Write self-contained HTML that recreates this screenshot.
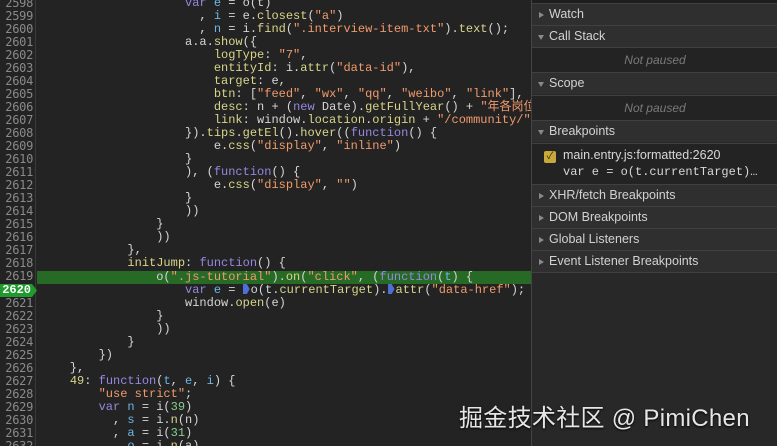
<!DOCTYPE html>
<html><head><meta charset="utf-8"><style>
*{margin:0;padding:0;box-sizing:border-box}
body{width:777px;height:446px;overflow:hidden;background:#232323;position:relative;font-family:"Liberation Sans","Noto Sans CJK SC",sans-serif}
#code{position:absolute;left:0;top:0;width:532px;height:446px;overflow:hidden;background:#232323}
#gut{position:absolute;left:0;top:0;width:36px;height:446px;background:#232323;border-right:1px solid #3a3a3a}
.ln{position:absolute;left:0;width:33px;text-align:right;font:12px/13px "DejaVu Sans Mono",monospace;color:#8a8a8a;letter-spacing:-0.3px}
.cl{position:absolute;left:41px;white-space:pre;font:12px/13px "Liberation Mono","Noto Sans CJK SC",monospace;color:#d6d6d6}
.k{color:#9488e0}.p{color:#d8d58a}.s{color:#f09a6c}.v{color:#6fb6e6}.n{color:#86d08e}
#hl{position:absolute;left:37px;top:271px;width:495px;height:13px;background:#266a26}
#bp{position:absolute;left:0;top:284px;width:37px;height:13px;background:#1f9a2d;clip-path:polygon(0 0,32px 0,37px 50%,32px 100%,0 100%)}
#bp span{position:absolute;right:6px;top:0;font:bold 12px/13px "Liberation Mono",monospace;color:#fff}
.mk{display:inline-block;width:7px;height:10px;background:#4f6fd8;vertical-align:-1px;clip-path:polygon(0 0,60% 0,100% 50%,60% 100%,0 100%);margin-right:1px}
#side{position:absolute;left:531px;top:0;width:246px;height:446px;background:#282828;border-left:1px solid #444}
.h{position:absolute;left:0;width:246px;height:22px;background:#2f2f2f;border-top:1px solid #404040;font-size:12.5px;line-height:21px;color:#d2d2d2;padding-left:17px}
.h:before{content:"";position:absolute;left:7px;top:8px;border-left:5px solid #8a8a8a;border-top:3.5px solid transparent;border-bottom:3.5px solid transparent}
.h.o:before{left:6px;top:9px;border-top:5px solid #8a8a8a;border-left:3.5px solid transparent;border-right:3.5px solid transparent;border-bottom:0}
.c{position:absolute;left:0;width:246px;background:#232323;border-top:1px solid #404040}
.np{text-align:center;font-style:italic;font-size:12px;color:#7a7a7a}
#wm{position:absolute;left:459px;top:398px;font-size:24px;color:#e6e6e6;text-shadow:0 1px 2px #000;letter-spacing:0.3px;font-family:"Liberation Sans","Noto Sans CJK SC",sans-serif}
</style></head><body>
<div id="code">
<div id="gut"></div>
<div id="hl"></div>
<div id="bp"><span>2620</span></div>
<div class="ln" style="top:-3px">2598</div><div class="cl" style="top:-3px">                    <span class="k">var</span> <span class="v">e</span> = o(t)</div>
<div class="ln" style="top:10px">2599</div><div class="cl" style="top:10px">                      , <span class="v">i</span> = e.<span class="p">closest</span>(<span class="s">"a"</span>)</div>
<div class="ln" style="top:23px">2600</div><div class="cl" style="top:23px">                      , <span class="v">n</span> = i.<span class="p">find</span>(<span class="s">".interview-item-txt"</span>).<span class="p">text</span>();</div>
<div class="ln" style="top:36px">2601</div><div class="cl" style="top:36px">                    a.a.<span class="p">show</span>({</div>
<div class="ln" style="top:49px">2602</div><div class="cl" style="top:49px">                        <span class="p">logType</span>: <span class="s">"7"</span>,</div>
<div class="ln" style="top:62px">2603</div><div class="cl" style="top:62px">                        <span class="p">entityId</span>: i.<span class="p">attr</span>(<span class="s">"data-id"</span>),</div>
<div class="ln" style="top:75px">2604</div><div class="cl" style="top:75px">                        <span class="p">target</span>: e,</div>
<div class="ln" style="top:88px">2605</div><div class="cl" style="top:88px">                        <span class="p">btn</span>: [<span class="s">"feed"</span>, <span class="s">"wx"</span>, <span class="s">"qq"</span>, <span class="s">"weibo"</span>, <span class="s">"link"</span>],</div>
<div class="ln" style="top:101px">2606</div><div class="cl" style="top:101px">                        <span class="p">desc</span>: n + (<span class="k">new</span> Date).<span class="p">getFullYear</span>() + <span class="s">"年各岗位面试题"</span></div>
<div class="ln" style="top:114px">2607</div><div class="cl" style="top:114px">                        <span class="p">link</span>: window.<span class="p">location</span>.<span class="p">origin</span> + <span class="s">"/community/"</span></div>
<div class="ln" style="top:127px">2608</div><div class="cl" style="top:127px">                    }).<span class="p">tips</span>.<span class="p">getEl</span>().<span class="p">hover</span>((<span class="k">function</span>() {</div>
<div class="ln" style="top:140px">2609</div><div class="cl" style="top:140px">                        e.<span class="p">css</span>(<span class="s">"display"</span>, <span class="s">"inline"</span>)</div>
<div class="ln" style="top:153px">2610</div><div class="cl" style="top:153px">                    }</div>
<div class="ln" style="top:166px">2611</div><div class="cl" style="top:166px">                    ), (<span class="k">function</span>() {</div>
<div class="ln" style="top:179px">2612</div><div class="cl" style="top:179px">                        e.<span class="p">css</span>(<span class="s">"display"</span>, <span class="s">""</span>)</div>
<div class="ln" style="top:192px">2613</div><div class="cl" style="top:192px">                    }</div>
<div class="ln" style="top:205px">2614</div><div class="cl" style="top:205px">                    ))</div>
<div class="ln" style="top:218px">2615</div><div class="cl" style="top:218px">                }</div>
<div class="ln" style="top:231px">2616</div><div class="cl" style="top:231px">                ))</div>
<div class="ln" style="top:244px">2617</div><div class="cl" style="top:244px">            },</div>
<div class="ln" style="top:257px">2618</div><div class="cl" style="top:257px">            <span class="p">initJump</span>: <span class="k">function</span>() {</div>
<div class="ln" style="top:270px">2619</div><div class="cl" style="top:271px">                o(<span class="s">".js-tutorial"</span>).<span class="p">on</span>(<span class="s">"click"</span>, (<span class="k">function</span>(<span class="v">t</span>) {</div>
<div class="cl" style="top:284px">                    <span class="k">var</span> <span class="v">e</span> = <span class="mk"></span>o(t.<span class="p">currentTarget</span>).<span class="mk"></span><span class="p">attr</span>(<span class="s">"data-href"</span>);</div>
<div class="ln" style="top:297px">2621</div><div class="cl" style="top:297px">                    window.<span class="p">open</span>(e)</div>
<div class="ln" style="top:310px">2622</div><div class="cl" style="top:310px">                }</div>
<div class="ln" style="top:323px">2623</div><div class="cl" style="top:323px">                ))</div>
<div class="ln" style="top:336px">2624</div><div class="cl" style="top:336px">            }</div>
<div class="ln" style="top:349px">2625</div><div class="cl" style="top:349px">        })</div>
<div class="ln" style="top:362px">2626</div><div class="cl" style="top:362px">    },</div>
<div class="ln" style="top:375px">2627</div><div class="cl" style="top:375px">    <span class="p">49</span>: <span class="k">function</span>(<span class="v">t</span>, <span class="v">e</span>, <span class="v">i</span>) {</div>
<div class="ln" style="top:388px">2628</div><div class="cl" style="top:388px">        <span class="s">"use strict"</span>;</div>
<div class="ln" style="top:401px">2629</div><div class="cl" style="top:401px">        <span class="k">var</span> <span class="v">n</span> = i(<span class="n">39</span>)</div>
<div class="ln" style="top:414px">2630</div><div class="cl" style="top:414px">          , <span class="v">s</span> = i.<span class="p">n</span>(n)</div>
<div class="ln" style="top:427px">2631</div><div class="cl" style="top:427px">          , <span class="v">a</span> = i(<span class="n">31</span>)</div>
<div class="ln" style="top:440px">2632</div><div class="cl" style="top:440px">            <span class="v">o</span> = i.<span class="p">n</span>(a)</div>
</div>
<div id="side">
<div style="position:absolute;left:0;top:0;width:246px;height:3px;background:#1e1e1e"></div>
<div class="h" style="top:3px">Watch</div>
<div class="h o" style="top:25px">Call Stack</div>
<div class="c np" style="top:47px;height:25px;line-height:24px">Not paused</div>
<div class="h o" style="top:72px">Scope</div>
<div class="c np" style="top:95px;height:25px;line-height:24px">Not paused</div>
<div class="h o" style="top:120px">Breakpoints</div>
<div class="c" style="top:143px;height:41px">
<div style="position:absolute;left:12px;top:7px;width:12px;height:12px;background:#c9a93a;border-radius:2px;color:#3a2c00;font-size:10px;line-height:12px;text-align:center">✓</div>
<div style="position:absolute;left:31px;top:4px;font-size:12.5px;color:#d8d8d8">main.entry.js:formatted:2620</div>
<div style="position:absolute;left:31px;top:21px;font:12px/14px 'Liberation Mono',monospace;color:#d8d8d8;white-space:pre">var e = o(t.currentTarget)…</div>
</div>
<div class="h" style="top:184px">XHR/fetch Breakpoints</div>
<div class="h" style="top:206px">DOM Breakpoints</div>
<div class="h" style="top:228px">Global Listeners</div>
<div class="h" style="top:250px;height:23px;border-bottom:1px solid #404040">Event Listener Breakpoints</div>
</div>
<div id="wm">掘金技术社区 @ PimiChen</div>
</body></html>
